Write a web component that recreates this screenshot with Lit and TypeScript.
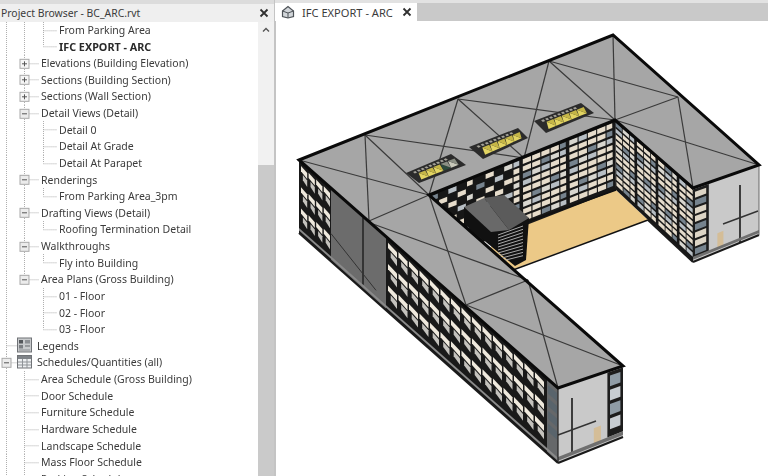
import { LitElement, html, svg, css } from 'lit';
import { customElement } from 'lit/decorators.js';

type Pt = [number, number];
type Wall = { tl: Pt; tr: Pt; bl: Pt; br: Pt };
type Row = { level: number; text: string; box?: '+' | '-'; bold?: boolean; last?: boolean; outer?: boolean; icon?: 'legend' | 'schedule'; top?: boolean };

const ROWS: Row[] = [
  { level: 2, text: 'From Parking Area' },
  { level: 2, text: 'IFC EXPORT - ARC', bold: true, last: true },
  { level: 1, text: 'Elevations (Building Elevation)', box: '+' },
  { level: 1, text: 'Sections (Building Section)', box: '+' },
  { level: 1, text: 'Sections (Wall Section)', box: '+' },
  { level: 1, text: 'Detail Views (Detail)', box: '-' },
  { level: 2, text: 'Detail 0' },
  { level: 2, text: 'Detail At Grade' },
  { level: 2, text: 'Detail At Parapet', last: true },
  { level: 1, text: 'Renderings', box: '-' },
  { level: 2, text: 'From Parking Area_3pm', last: true },
  { level: 1, text: 'Drafting Views (Detail)', box: '-' },
  { level: 2, text: 'Roofing Termination Detail', last: true },
  { level: 1, text: 'Walkthroughs', box: '-' },
  { level: 2, text: 'Fly into Building', last: true },
  { level: 1, text: 'Area Plans (Gross Building)', box: '-', last: true },
  { level: 2, text: '01 - Floor', outer: true },
  { level: 2, text: '02 - Floor', outer: true },
  { level: 2, text: '03 - Floor', outer: true, last: true },
  { level: 0, text: 'Legends', icon: 'legend' },
  { level: 0, text: 'Schedules/Quantities (all)', icon: 'schedule', box: '-' },
  { level: 1, text: 'Area Schedule (Gross Building)' },
  { level: 1, text: 'Door Schedule' },
  { level: 1, text: 'Furniture Schedule' },
  { level: 1, text: 'Hardware Schedule' },
  { level: 1, text: 'Landscape Schedule' },
  { level: 1, text: 'Mass Floor Schedule' },
  { level: 1, text: 'Parking Schedule' },
];

const TEXT_X = [37, 41, 59];
const H = 16.64;
const MID = H / 2;

const lerp = (a: Pt, b: Pt, t: number): Pt => [a[0] + (b[0] - a[0]) * t, a[1] + (b[1] - a[1]) * t];
const at = (w: Wall, u: number, v: number): Pt => lerp(lerp(w.tl, w.tr, u), lerp(w.bl, w.br, u), v);
const pts = (list: Pt[]) => list.map((p) => `${p[0].toFixed(1)},${p[1].toFixed(1)}`).join(' ');
const cell = (w: Wall, u0: number, u1: number, v0: number, v1: number) =>
  pts([at(w, u0, v0), at(w, u1, v0), at(w, u1, v1), at(w, u0, v1)]);
const poly = (p: string, fill: string) => svg`<polygon points=${p} fill=${fill} />`;
const line = (a: Pt, b: Pt, w = 1, c = '#3c3c3c') =>
  svg`<line x1=${a[0]} y1=${a[1]} x2=${b[0]} y2=${b[1]} stroke=${c} stroke-width=${w} />`;

const SW: Wall = { tl: [298, 160], tr: [557, 388], bl: [298, 233], br: [557, 463] };
const NORTH: Wall = { tl: [428, 195], tr: [614, 120], bl: [428, 263], br: [615, 190] };
const EAST_IN: Wall = { tl: [614, 120], tr: [692, 188], bl: [615, 190], br: [692, 262] };
const END_S: Wall = { tl: [557, 388], tr: [622, 366], bl: [557, 463], br: [622, 437] };
const END_E: Wall = { tl: [692, 188], tr: [758, 165], bl: [692, 262], br: [758, 235] };

// long south-west wall: black bays with pale slabs in three storeys
function swWall() {
  const out = [poly(pts([SW.tl, SW.tr, SW.br, SW.bl]), '#191919')];
  const u = (x: number) => (x - 298) / 259;
  out.push(poly(cell(SW, u(330), u(385), 0, 0.98), '#6c6c6c'));
  out.push(poly(cell(SW, u(546), 1, 0, 0.98), '#66686a'));
  out.push(line(at(SW, u(362), 0.02), at(SW, u(362), 0.93), 1.5, '#222'));
  out.push(line(at(SW, u(330), 0.62), at(SW, u(375), 0.85), 1, '#333'));
  for (let i = 0; i < 4; i++) {
    const x = 300 + i * 7.6;
    bay(out, u(x), u(x + 6.2));
  }
  for (let i = 0; i < 15; i++) {
    const x = 387 + i * 10.5;
    bay(out, u(x), u(x + 9));
  }
  for (let j = 0; j < 4; j++) out.push(poly(cell(SW, u(547), u(556), 0.08 + j * 0.17, 0.19 + j * 0.17), '#59646c'));
  out.push(poly(cell(SW, 0, 1, 0.93, 0.965), '#8a8a8a'));
  return out;
}

function bay(out: unknown[], u0: number, u1: number) {
  [0.06, 0.35, 0.64].forEach((v) => {
    out.push(poly(pts([at(SW, u0, v), at(SW, u1, v + 0.02), at(SW, u1, v + 0.1), at(SW, u0, v + 0.07)]), '#efe9dd'));
    out.push(poly(pts([at(SW, u0 + (u1 - u0) * 0.3, v + 0.1), at(SW, u1, v + 0.12), at(SW, u1, v + 0.21), at(SW, u0 + (u1 - u0) * 0.3, v + 0.17)]), '#c4c2bd'));
  });
}

function gridWall(w: Wall, cols: number, rows: number, heavy: number, darkTo: number) {
  const out = [poly(pts([w.tl, w.tr, w.br, w.bl]), '#171717')];
  for (let i = 0; i < cols; i++) {
    for (let j = 0; j < rows; j++) {
      const n = (i * 5 + j * 3) % 7;
      const u = i / cols;
      const v = 0.03 + (j / rows) * 0.93;
      const dark = u < darkTo && (i + j * 3) % 2 !== 0;
      if (dark) continue;
      const c = n === 0 ? '#76838e' : n === 3 ? '#b7bec4' : n === 5 ? '#d8d6cf' : '#e6dccb';
      const end = i % heavy === heavy - 1 ? 0.7 : 0.96;
      out.push(poly(cell(w, u + 0.08 / cols, u + end / cols, v, v + 0.68 * 0.93 / rows), c));
    }
  }
  return out;
}

function skylight(a: Pt, b: Pt, c: Pt, d: Pt, seed: number) {
  const w: Wall = { tl: a, tr: b, bl: d, br: c };
  const out = [poly(pts([a, b, c, d]), '#2b2b2b')];
  for (let i = 0; i < 9; i++) {
    const u = 0.12 + (i / 9) * 0.76;
    out.push(poly(cell(w, u, u + 0.05, 0.12, 0.26), '#a5a39a'));
  }
  const n = 5;
  for (let i = 0; i < n; i++) {
    const u = 0.1 + (i / n) * 0.8;
    const s = 0.8 / n;
    const pale = seed === 1 && i > 2;
    const fill = pale ? (i === 3 ? '#2d4a3c' : '#c9c9bb') : '#e2d462';
    out.push(poly(pts([at(w, u, 0.82), at(w, u + s / 2, 0.34), at(w, u + s, 0.82)]), fill));
    out.push(poly(pts([at(w, u + s / 2, 0.34), at(w, u + s, 0.82), at(w, u + s * 1.4, 0.34)]), pale ? '#8b8f84' : '#c5b647'));
  }
  return out;
}

const ROOF: Pt[] = [[298, 160], [612, 35], [758, 165], [692, 188], [614, 120], [428, 195], [622, 366], [557, 388]];
const HIPS: [Pt, Pt][] = [
  [[298, 160], [428, 195]],
  [[364, 135], [368, 221]],
  [[364, 135], [428, 195]],
  [[364, 135], [523, 158]],
  [[457, 99], [428, 195]],
  [[457, 99], [523, 158]],
  [[457, 99], [614, 120]],
  [[548, 61], [523, 158]],
  [[548, 61], [614, 120]],
  [[548, 61], [677, 97]],
  [[612, 35], [614, 120]],
  [[677, 97], [614, 120]],
  [[677, 97], [692, 188]],
  [[614, 120], [758, 165]],
  [[368, 221], [428, 195]],
  [[428, 195], [465, 305]],
  [[372, 224], [527, 280]],
  [[465, 305], [527, 280]],
  [[465, 305], [622, 366]],
  [[527, 280], [557, 388]],
];

function model() {
  return svg`
    ${poly(pts([[490, 235], [615, 190], [647, 220], [510, 270], [490, 252]]), '#ecc987')}
    ${gridWall(NORTH, 20, 9, 5, 0.45)}
    ${gridWall(EAST_IN, 11, 11, 3, 0)}
    ${line([647, 220], [512, 270], 1.5, '#111')}
    ${line([615, 190], [523, 223], 1.5, '#111')}
    ${poly(pts([[463, 207], [528, 218], [525, 260], [514, 266], [463, 224]]), '#111')}
    ${[0, 1, 2, 3, 4, 5, 6, 7, 8, 9].map((i) => line([497, 235 + i * 3], [522, 226 + i * 3.3], 1, '#a9a9a9'))}
    ${poly(pts([[463, 207], [483, 198], [508, 230], [490, 232]]), '#696969')}
    ${poly(pts([[483, 198], [503, 195], [528, 218], [508, 230]]), '#5b5b5b')}
    ${swWall()}
    ${poly(pts([END_S.tl, END_S.tr, END_S.br, END_S.bl]), '#c9c9c9')}
    ${poly(cell(END_S, 0.76, 1, 0.02, 0.92), '#1d1d1d')}
    ${[0, 1, 2, 3].map((j) => poly(cell(END_S, 0.8, 0.96, 0.07 + j * 0.2, 0.22 + j * 0.2), j % 2 ? '#c7cdd2' : '#8f9ca6'))}
    ${poly(cell(END_S, 0.55, 0.66, 0.72, 0.96), '#d4bd97')}
    ${line([571, 398], [571, 453], 1.6, '#1a1a1a')}
    ${line([557, 435], [595, 421], 1.4, '#333')}
    ${poly(cell(END_S, 0, 1, 0.92, 0.97), '#6f6f6f')}
    ${poly(pts([END_E.tl, END_E.tr, END_E.br, END_E.bl]), '#c9c9c9')}
    ${poly(cell(END_E, 0, 0.24, 0.02, 0.94), '#1d1d1d')}
    ${[0, 1, 2, 3, 4, 5, 6, 7].map((j) => poly(cell(END_E, 0.03, 0.2, 0.06 + j * 0.11, 0.14 + j * 0.11), j % 3 === 1 ? '#76838e' : '#ddd5c6'))}
    ${poly(cell(END_E, 0.37, 0.46, 0.74, 0.95), '#d4bd97')}
    ${line([739, 185], [739, 242], 1.6, '#1a1a1a')}
    ${line([722, 224], [757, 211], 1.4, '#333')}
    ${poly(cell(END_E, 0, 1, 0.93, 0.97), '#6f6f6f')}
    ${line(SW.bl, SW.br, 2, '#1a1a1a')}
    ${line(END_S.bl, END_S.br, 2, '#1a1a1a')}
    ${line(END_E.bl, END_E.br, 2, '#1a1a1a')}
    ${line(EAST_IN.br, [647, 220], 2, '#1a1a1a')}
    ${line(END_E.tr, END_E.br, 1, '#666')}
    ${line(END_S.tl, END_S.bl, 1.2, '#222')}
    ${poly(pts(ROOF), '#a6a6a6')}
    ${HIPS.map(([a, b]) => line(a, b, 1.2, '#3a3a3a'))}
    ${skylight([405, 173], [450, 154], [465, 165], [418, 183], 1)}
    ${skylight([468, 147], [517, 128], [527, 138], [482, 159], 0)}
    ${skylight([533, 121], [580, 103], [593, 113], [545, 133], 0)}
    <polygon points=${pts(ROOF)} fill="none" stroke="#0a0a0a" stroke-width="3" stroke-linejoin="miter" />
  `;
}

function gutter(r: Row) {
  const x = TEXT_X[r.level];
  const dots = (x1: number, y1: number, x2: number, y2: number) =>
    svg`<line class="dot" x1=${x1} y1=${y1} x2=${x2} y2=${y2} />`;
  const box = (cx: number, kind: '+' | '-') => svg`
    <rect x=${cx - 4.5} y=${MID - 4} width="9" height="9" fill=${kind === '-' ? '#ececec' : '#f6f6f6'} stroke="#a9a9a9" />
    <line x1=${cx - 2.5} y1=${MID + 0.5} x2=${cx + 2.5} y2=${MID + 0.5} stroke="#555" />
    ${kind === '+' ? svg`<line x1=${cx} y1=${MID - 2} x2=${cx} y2=${MID + 3} stroke="#555" />` : ''}`;
  const parts: unknown[] = [dots(6.5, 0, 6.5, H)];
  if (r.level === 1) {
    parts.push(dots(24.5, 0, 24.5, r.last ? MID : H));
    parts.push(dots(24.5, MID + 0.5, 39, MID + 0.5));
    if (r.box) parts.push(box(24.5, r.box));
  }
  if (r.level === 2) {
    if (!r.outer) parts.push(dots(24.5, 0, 24.5, H));
    parts.push(dots(43.5, 0, 43.5, r.last ? MID : H));
    parts.push(dots(43.5, MID + 0.5, 57, MID + 0.5));
  }
  if (r.level === 0) {
    parts.push(dots(6.5, MID + 0.5, 18, MID + 0.5));
    if (r.box) parts.push(box(6.5, r.box));
    parts.push(r.icon === 'legend' ? legendIcon() : scheduleIcon());
  }
  return html`<svg class="gutter" width=${x} height=${H} viewBox="0 0 ${x} ${H}">${parts}</svg>`;
}

const legendIcon = () => svg`
  <rect x="17.5" y="1" width="14" height="14" fill="#c9cbcd" stroke="#6f7276" />
  <rect x="19" y="3" width="4" height="3.5" fill="#54575b" /><rect x="25" y="3" width="5" height="3.5" fill="#8d9094" />
  <rect x="19" y="8" width="4" height="3.5" fill="#7c7f83" /><rect x="25" y="8.5" width="5" height="1" fill="#66696d" />
  <rect x="19" y="12.5" width="11" height="1" fill="#8d9094" />`;

const scheduleIcon = () => svg`
  <rect x="17.5" y="1.5" width="14" height="12.5" fill="#eef0f2" stroke="#6f7276" />
  <rect x="18" y="2" width="13" height="3" fill="#7f8388" />
  <path d="M18 8h13M18 11h13M22.5 5v9M27 5v9" stroke="#8f9398" fill="none" />`;

@customElement('app-root')
export class AppRoot extends LitElement {
  static styles = css`
    :host {
      display: block;
      width: 768px;
      height: 476px;
      overflow: hidden;
      background: #fff;
      font-family: 'Noto Sans', 'Open Sans', sans-serif;
      font-size: 10.5px;
      color: #3b3b3b;
    }
    .shell { display: flex; height: 100%; filter: blur(0.35px); }

    .browser {
      width: 274px;
      flex: none;
      display: flex;
      flex-direction: column;
      border-right: 2px solid #c4c4c4;
      box-sizing: content-box;
      margin-right: -1px;
      min-height: 0;
    }
    .title {
      height: 17.6px;
      flex: none;
      border-top: 4px solid #dcdcdc;
      background: #efefef;
      display: flex;
      align-items: center;
      justify-content: space-between;
      padding: 0 5px 0 1px;
      font-size: 10.4px;
    }
    .body { flex: 1; display: flex; min-height: 0; }
    .tree { flex: 1; min-width: 0; overflow: hidden; }
    .row { display: flex; align-items: center; height: 16.64px; white-space: nowrap; }
    .row.bold { font-weight: 700; color: #2a2a2a; font-size: 10.8px; }
    .gutter { flex: none; overflow: visible; }
    .dot { stroke: #aeaeae; stroke-dasharray: 1 1; }

    .scroll { width: 16px; flex: none; background: #f1f1f1; display: flex; flex-direction: column; }
    .chev { height: 16px; flex: none; display: flex; justify-content: center; align-items: center; }
    .track { flex: none; height: 127px; }
    .thumb { flex: 1; background: #cacaca; }

    .view { flex: 1; min-width: 0; display: flex; flex-direction: column; }
    .tabs { height: 18px; flex: none; border-top: 3px solid #e2e2e2; background: #c9c9c9; display: flex; }
    .tab {
      width: 142px;
      background: #fff;
      display: flex;
      align-items: center;
      gap: 7px;
      padding: 0 5px 0 6px;
      box-sizing: border-box;
      font-size: 11.1px;
      white-space: nowrap;
    }
    .tab span { flex: 1; }
    .canvas { flex: 1; min-height: 0; }
    .canvas svg { display: block; }
  `;

  render() {
    const close = html`<svg width="10" height="10" viewBox="0 0 10 10"><path d="M1.5 1.5l7 7M8.5 1.5l-7 7" stroke="#303030" stroke-width="1.8" fill="none" /></svg>`;
    return html`
      <div class="shell">
        <div class="browser">
          <div class="title"><span>Project Browser - BC_ARC.rvt</span>${close}</div>
          <div class="body">
            <div class="tree">
              ${ROWS.map((r) => html`<div class="row ${r.bold ? 'bold' : ''}">${gutter(r)}<span>${r.text}</span></div>`)}
            </div>
            <div class="scroll">
              <div class="chev"><svg width="8" height="6" viewBox="0 0 8 6"><path d="M1 4.5l3-3 3 3" stroke="#555" stroke-width="1.4" fill="none" /></svg></div>
              <div class="track"></div>
              <div class="thumb"></div>
            </div>
          </div>
        </div>
        <div class="view">
          <div class="tabs">
            <div class="tab">
              <svg width="14" height="14" viewBox="0 0 14 14"><path d="M1.5 6L7 1.5 12.5 6v5.500L7 13l-5.500-1.500z" fill="#d2d6da" stroke="#4d5257" stroke-width="1.2" /><path d="M1.500 6L7 8l5.500-2M7 8v5" fill="none" stroke="#4d5257" /></svg>
              <span>IFC EXPORT - ARC</span>${close}
            </div>
          </div>
          <div class="canvas">
            <svg width="494" height="455" viewBox="274 21 494 455">${model()}</svg>
          </div>
        </div>
      </div>
    `;
  }
}
